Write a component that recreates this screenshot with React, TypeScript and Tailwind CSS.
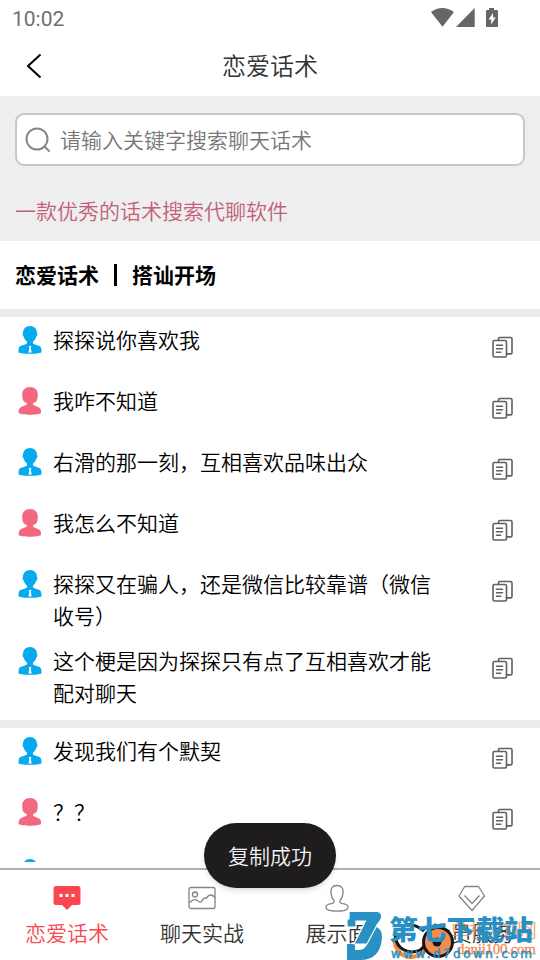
import React from "react";

type Message = { who: "m" | "f"; lines: string[] };

const groups: Message[][] = [
  [
    { who: "m", lines: ["探探说你喜欢我"] },
    { who: "f", lines: ["我咋不知道"] },
    { who: "m", lines: ["右滑的那一刻，互相喜欢品味出众"] },
    { who: "f", lines: ["我怎么不知道"] },
    { who: "m", lines: ["探探又在骗人，还是微信比较靠谱（微信", "收号）"] },
    { who: "m", lines: ["这个梗是因为探探只有点了互相喜欢才能", "配对聊天"] },
  ],
  [
    { who: "m", lines: ["发现我们有个默契"] },
    { who: "f", lines: ["？？"] },
    { who: "m", lines: [""] },
  ],
];

function PersonIcon({ who }: { who: "m" | "f" }) {
  if (who === "m") {
    return (
      <svg width="24" height="28" viewBox="0 0 24 28" className="shrink-0">
        <path fill="#07a9ef" d="M12 0C7.800 0 5 3 5 7C4.300 7.600 4.600 9.800 5.700 10.500C6.300 13 7.500 14.500 9 15.500V17.500C6.500 19.200 3 19.300 1.700 20.500C.6 22 .3 24.500.6 26.500C4 28.300 20 28.300 23.400 26.500C23.700 24.500 23.400 22 22.300 20.500C21 19.300 17.500 19.200 15 17.500V15.500C16.500 14.500 17.700 13 18.300 10.500C19.400 9.800 19.700 7.600 19 7C19 3 16.200 0 12 0Z" />
        <path fill="#fff" d="M10.700 20h2.800l-.7 1.800.9 4.800h-3.200l.9-4.800z" />
      </svg>
    );
  }
  return (
    <svg width="24" height="28" viewBox="0 0 24 28" className="shrink-0">
      <path fill="#f4687f" d="M12 0C7 0 4 3.400 4.200 8.200C4.300 10 4.600 13 5.700 14.200C6.800 15.300 8.600 15.700 9 16.700C9.200 18.500 5 18.700 2.200 20.700C.8 21.700.5 24 .6 26C4 28.300 20 28.300 23 26C23.200 24 22.900 21.700 21.500 20.700C18.700 18.700 14.700 18.500 15 16.700C15.400 15.700 17.200 15.300 18.300 14.200C19.400 13 19.700 10 19.800 8.200C20 3.400 17 0 12 0Z" />
    </svg>
  );
}

function CopyIcon() {
  return (
    <svg width="22" height="22" viewBox="0 0 22 22" fill="none" stroke="#606060" strokeWidth="1.600" strokeLinecap="round" strokeLinejoin="round">
      <rect x="1" y="4.500" width="13.500" height="16.500" rx="1.500" />
      <path d="M6.500 4V2.800Q6.500 1.500 7.800 1.500H18.700Q20 1.500 20 2.900V16.500Q20 17.900 18.700 17.900H14.500M4.500 9.200H10.500M4.500 12.800H10.500M4.500 16.200H8.700" />
    </svg>
  );
}

function Row({ m }: { m: Message }) {
  return (
    <div className="flex min-h-[61px] shrink-0 items-start pb-[7px] pl-[18px]">
      <div className="pt-[9px]"><PersonIcon who={m.who} /></div>
      <div className="ml-[11px] w-[400px] pt-[6px] text-[21px] leading-8 text-black">
        {m.lines.map((l) => <div key={l} className="whitespace-nowrap">{l}</div>)}
      </div>
      <div className="ml-[39px] pt-[19px]"><CopyIcon /></div>
    </div>
  );
}

function Tab({ label, active, children }: { label: string; active?: boolean; children: React.ReactNode }) {
  return (
    <div className={active ? "flex w-[135px] flex-col items-center text-[#fc4650]" : "flex w-[135px] flex-col items-center text-[#333]"}>
      <svg width="28" height="28" viewBox="0 0 28 28" fill="none" stroke="#858585" strokeWidth="1.300" strokeLinejoin="round" className="mr-px mt-[14px]">
        {children}
      </svg>
      <span className="mr-px mt-[4px] text-[21px] leading-8">{label}</span>
    </div>
  );
}

function Watermark() {
  return (
    <svg className="absolute left-[340px] top-[900px]" width="200" height="60" viewBox="0 0 200 60">
      <text x="110" y="38" fontSize="20" fill="#f58a4b" opacity=".75" textLength="87">单机100网</text>
      <text x="117" y="54" fontSize="15" fill="#f58a4b" stroke="#f58a4b" strokeWidth=".3" textLength="79" style={{ fontFamily: "'Liberation Serif', serif" }}>danji100.com</text>
      <path d="M54 38Q56 56 70 57Q80 57 85 50" fill="none" stroke="#f58a3a" strokeWidth="4" />
      <path d="M55 32Q55 50 71 52Q83 52 85 43M64 26Q73 22 84 31" fill="none" stroke="#171717" strokeWidth="3" />
      <circle cx="98" cy="42" r="14.500" fill="#f58b4c" stroke="#171717" strokeWidth="3" />
      <circle cx="97" cy="42" r="4.500" fill="#171717" />
      <path d="M84 30L90 24M92 27L96 24" stroke="#171717" strokeWidth="2" />
      {/* badge: a D with a 7 laid over it */}
      <path fill="#2890c3" d="M34 26Q42 28 42 37Q41 60 20 60H7V44H15V50H20Q26 49 28 42Z" />
      <path fill="#2890c3" stroke="#fff" strokeWidth="1.200" d="M9 11.500H37Q42.500 12 41.500 18Q40 22 37 25L27 44H14L25.500 21H16V27H7V19H9Z" />
      <text x="49" y="40" fontSize="27" fontWeight="900" fill="#2890c3" textLength="144" lengthAdjust="spacingAndGlyphs">第七下载站</text>
      <text x="51" y="58" fontSize="12" fontWeight="400" fill="#2890c3" stroke="#2890c3" strokeWidth=".5" textLength="141" style={{ fontFamily: "'DejaVu Sans', sans-serif" }}>www.d7down.com</text>
    </svg>
  );
}

export default function App() {
  return (
    <div className="relative flex h-[960px] w-[540px] flex-col overflow-hidden bg-white font-['Noto_Sans_CJK_SC',sans-serif] font-[350]">
      <div className="flex h-9 shrink-0 items-center justify-between pl-3 pr-[41px]">
        <span className="pt-px font-['Roboto',sans-serif] text-[21px] font-normal leading-9 text-[#707070]">10:02</span>
        <svg width="68" height="20" viewBox="0 0 68 20" fill="#666">
          <path d="M0 4Q11-4 23 4L11.500 18.700ZM43.700 0V19H25ZM58 0h5v2h3q1 0 1 1v15q0 1-1 1H56q-1 0-1-1V3q0-1 1-1h2z" />
          <path fill="#fff" d="M62 5L57.500 11.500H60.200V16.500L64.700 9.500H62Z" />
        </svg>
      </div>
      <div className="flex h-[60px] shrink-0 items-center">
        <svg className="ml-[25px]" width="18" height="26" viewBox="0 0 18 26" fill="none" stroke="#000" strokeWidth="2"><path d="M15.500 1.500L3 13L15.500 24.500" /></svg>
        <h1 className="mb-[2px] ml-[179px] text-[24px] leading-9 text-[#333]">恋爱话术</h1>
      </div>
      <div className="h-[145px] shrink-0 bg-[#eee] px-[15px] pt-[17px]">
        <div className="flex h-[53px] items-center rounded-[9px] border-2 border-[#c8c8c8] bg-white pl-2">
          <svg width="27" height="28" viewBox="0 0 27 28" fill="none" stroke="#888" strokeWidth="2" strokeLinecap="round"><circle cx="12" cy="13" r="10.500" /><path d="M19.500 20.500L24 25" /></svg>
          <span className="mb-px ml-2 text-[21px] leading-8 text-[#777]">请输入关键字搜索聊天话术</span>
        </div>
        <p className="mt-[28px] text-[21px] leading-8 text-[#c16076]">一款优秀的话术搜索代聊软件</p>
      </div>
      <div className="flex h-[68px] shrink-0 items-center pl-[15px] text-[21px] font-bold leading-8 text-black">
        <span className="mb-[3px]">恋爱话术</span><span className="ml-[15px] mr-[15px] h-[22px] w-[3px] bg-black" /><span className="mb-[3px]">搭讪开场</span>
      </div>
      <div className="flex h-[553px] shrink-0 flex-col overflow-hidden">
        {groups.map((g, i) => (
          <section key={i} className="shrink-0 pb-[5px]">
            <div className="h-2 bg-[#ececec]" />
            {g.map((m, j) => <Row key={j} m={m} />)}
          </section>
        ))}
      </div>
      <nav className="mt-[6px] flex h-[92px] shrink-0 border-t-2 border-[#b0b0b0]">
        <Tab label="恋爱话术" active>
          <path stroke="none" fill="#fc4650" d="M3 2H25Q27.500 2 27.500 4.500V18.500Q27.500 21 25 21H19L14 26L9 21H3Q.5 21 .5 18.500V4.500Q.5 2 3 2Z" />
          <path stroke="none" fill="#fff" d="M6.500 10h3v3h-3zM12.500 10h3v3h-3zM18.500 10h3v3h-3z" />
        </Tab>
        <Tab label="聊天实战">
          <rect x="1" y="3.500" width="26" height="21" rx="2" /><circle cx="7" cy="10.500" r="2.500" />
          <path d="M1.500 18.500Q6.500 14 9.500 16.500Q11.500 19.500 14 17Q16 12.500 18 14.500Q20.500 11 22.500 11Q25.500 11 27 14" />
        </Tab>
        <Tab label="展示面">
          <path d="M14 1.500C9.500 1.500 7.200 4.500 8 9C8.500 13 9.500 15 11 16.500C12 19.500 8.500 19.500 5 20.500C2.500 21.500 2.500 24 4 25.200C7 27.700 21 27.700 24 25.200C25.500 24 25.500 21.500 23 20.500C19.500 19.500 16 19.500 17 16.500C18.500 15 19.500 13 20 9C20.800 4.500 18.500 1.500 14 1.500Z" />
        </Tab>
        <Tab label="会员服务">
          <path d="M6.700 2.500H20.500L26.500 12L14 26.500L1 12ZM6.500 11.500L14 19.500L21.500 11.500" />
        </Tab>
      </nav>
      <Watermark />
      <div className="absolute left-[204px] top-[823px] flex h-[65px] w-[132px] items-center justify-center rounded-full bg-[#1e1c1d] pb-px text-[21px] leading-8 text-[#f3f3f3] shadow-md">复制成功</div>
    </div>
  );
}
